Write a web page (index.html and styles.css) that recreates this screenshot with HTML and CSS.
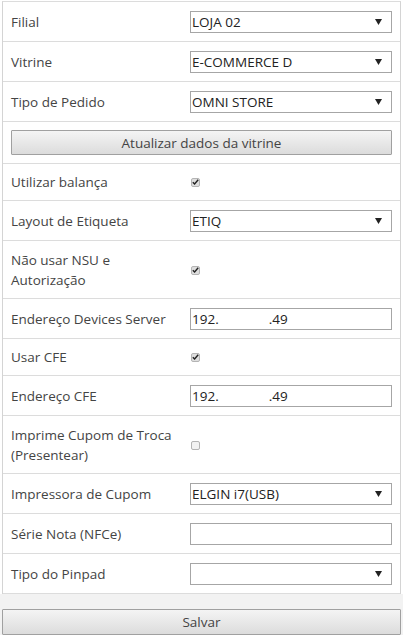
FILE: index.html
```html
<!DOCTYPE html>
<html lang="pt-BR">
<head>
<meta charset="utf-8">
<title>Configuração</title>
<link rel="stylesheet" href="styles.css">
</head>
<body>
<div class="form">
  <div class="row">
    <div class="label">Filial</div>
    <div class="select"><span class="val">LOJA 02</span><svg class="arrow" width="7" height="6" viewBox="0 0 7 6"><path d="M0 0H7L3.5 6Z"/></svg></div>
  </div>
  <div class="row">
    <div class="label">Vitrine</div>
    <div class="select"><span class="val">E-COMMERCE D</span><svg class="arrow" width="7" height="6" viewBox="0 0 7 6"><path d="M0 0H7L3.5 6Z"/></svg></div>
  </div>
  <div class="row">
    <div class="label">Tipo de Pedido</div>
    <div class="select"><span class="val">OMNI STORE</span><svg class="arrow" width="7" height="6" viewBox="0 0 7 6"><path d="M0 0H7L3.5 6Z"/></svg></div>
  </div>
  <div class="row row-btn">
    <button class="btn" type="button">Atualizar dados da vitrine</button>
  </div>
  <div class="row row-check">
    <div class="label">Utilizar balança</div>
    <div><span class="check on"><svg width="7" height="6" viewBox="0 0 7 6"><path d="M0.8 3.2L2.6 5L6.2 0.8" fill="none" stroke="#222" stroke-width="1.4"/></svg></span></div>
  </div>
  <div class="row">
    <div class="label">Layout de Etiqueta</div>
    <div class="select"><span class="val">ETIQ</span><svg class="arrow" width="7" height="6" viewBox="0 0 7 6"><path d="M0 0H7L3.5 6Z"/></svg></div>
  </div>
  <div class="row">
    <div class="label">Não usar NSU e<br>Autorização</div>
    <div><span class="check on"><svg width="7" height="6" viewBox="0 0 7 6"><path d="M0.8 3.2L2.6 5L6.2 0.8" fill="none" stroke="#222" stroke-width="1.4"/></svg></span></div>
  </div>
  <div class="row">
    <div class="label">Endereço Devices Server</div>
    <div class="input"><span class="ip">192.</span><span class="ip">.49</span></div>
  </div>
  <div class="row row-check">
    <div class="label">Usar CFE</div>
    <div><span class="check on"><svg width="7" height="6" viewBox="0 0 7 6"><path d="M0.8 3.2L2.6 5L6.2 0.8" fill="none" stroke="#222" stroke-width="1.4"/></svg></span></div>
  </div>
  <div class="row">
    <div class="label">Endereço CFE</div>
    <div class="input"><span class="ip">192.</span><span class="ip">.49</span></div>
  </div>
  <div class="row">
    <div class="label">Imprime Cupom de Troca<br>(Presentear)</div>
    <div><span class="check"></span></div>
  </div>
  <div class="row">
    <div class="label">Impressora de Cupom</div>
    <div class="select"><span class="val">ELGIN i7(USB)</span><svg class="arrow" width="7" height="6" viewBox="0 0 7 6"><path d="M0 0H7L3.5 6Z"/></svg></div>
  </div>
  <div class="row">
    <div class="label">Série Nota (NFCe)</div>
    <div class="input"></div>
  </div>
  <div class="row">
    <div class="label">Tipo do Pinpad</div>
    <div class="select"><span class="val"></span><svg class="arrow" width="7" height="6" viewBox="0 0 7 6"><path d="M0 0H7L3.5 6Z"/></svg></div>
  </div>
</div>
<div class="footer">
  <button class="btn btn-save" type="button">Salvar</button>
</div>
</body>
</html>
```
FILE: styles.css
```css
html, body {
  margin: 0;
  padding: 0;
  background: #fff;
}
body {
  font-family: "Open Sans", "Noto Sans", sans-serif;
  font-size: 13.5px;
  color: #444;
  padding-top: 1px;
}
.form {
  margin-left: 2px;
  width: 399px;
  box-sizing: border-box;
  border-left: 1px solid #d4d4d4;
  border-right: 1px solid #d4d4d4;
  border-top: 1px solid #dcdcdc;
}
.row {
  display: grid;
  grid-template-columns: 171px 1fr;
  column-gap: 8px;
  align-items: center;
  padding: 9px 8px 8px;
  border-bottom: 1px solid #dcdcdc;
}
.row-check {
  padding: 8px 8px 8px;
}
.label {
  line-height: 20px;
}
.select, .input {
  height: 22px;
  box-sizing: border-box;
  border: 1px solid #a6a6a6;
  background: #fff;
  display: flex;
  align-items: center;
  padding: 0 9px 0 1px;
  color: #222;
  font-size: 13.5px;
}
.select .val {
  flex: 1;
}
.arrow {
  fill: #222;
}
.input {
  gap: 50px;
}
.row-btn {
  display: flex;
  padding: 8px 8px 8px;
}
.btn {
  font-family: inherit;
  font-size: 13.5px;
  color: #444;
  border: 1px solid #a0a0a0;
  border-radius: 1px;
  background: linear-gradient(#f4f4f4, #dcdcdc);
  cursor: pointer;
}
.row-btn .btn {
  flex: 1;
  height: 25px;
}
.check {
  display: flex;
  align-items: center;
  justify-content: center;
  width: 9px;
  height: 9px;
  border: 1px solid #b4b4b4;
  border-radius: 2px;
  background: #f2f2f2;
  box-sizing: border-box;
  margin-left: 1px;
}
.check.on {
  background: #dedede;
}
.footer {
  background: #f2f2f2;
  padding-top: 15px;
  display: flex;
}
.btn-save {
  flex: 1;
  margin: 0 2px 0 2px;
  height: 26px;
}
```
